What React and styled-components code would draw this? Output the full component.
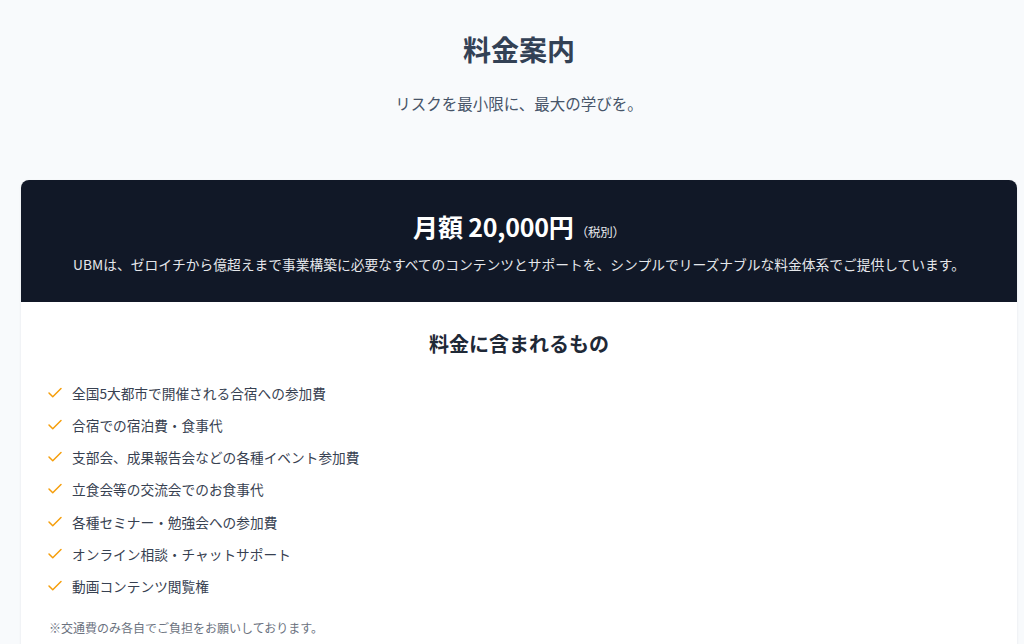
import React from 'react';
import styled, { createGlobalStyle } from 'styled-components';
import { Check } from 'lucide-react';

const GlobalStyle = createGlobalStyle`
    html, body {
        margin: 0;
        padding: 0;
        background: #f8fafc;
        overflow: hidden;
    }
    body {
        font-family: "Noto Sans CJK JP", "Noto Sans", sans-serif;
        -webkit-font-smoothing: antialiased;
    }
`;

const Page = styled.main`
    width: 1038px;
    padding: 33px 21px 40px;
    box-sizing: border-box;
`;

const Intro = styled.header`
    display: flex;
    flex-direction: column;
    align-items: center;
    gap: 24px;
    margin-bottom: 65px;
`;

const Title = styled.h1`
    margin: 0;
    font-size: 28px;
    line-height: 1.2;
    font-weight: 700;
    color: #334155;
`;

const Lead = styled.p`
    margin: 0;
    font-size: 15.5px;
    line-height: 24px;
    color: #475569;
`;

const Card = styled.section`
    border-radius: 8px;
    overflow: hidden;
    background: #ffffff;
    box-shadow: 0 1px 3px rgba(15, 23, 42, 0.08);
`;

const CardHead = styled.div`
    background: #111827;
    color: #ffffff;
    display: flex;
    flex-direction: column;
    align-items: center;
    gap: 11px;
    padding: 29px 24px 28px;
`;

const Price = styled.div`
    display: flex;
    align-items: baseline;
    font-size: 25px;
    line-height: 34px;
    font-weight: 700;
    letter-spacing: -0.2px;
`;

const Tax = styled.span`
    font-size: 12.5px;
    line-height: 1;
    font-weight: 400;
    margin-left: 2px;
    color: #e5e7eb;
`;

const Description = styled.p`
    margin: 0;
    font-size: 13.75px;
    line-height: 20px;
    color: #e5e7eb;
`;

const CardBody = styled.div`
    padding: 28px 28px 24px;
`;

const SectionTitle = styled.h2`
    margin: 0 0 24px;
    text-align: center;
    font-size: 20px;
    line-height: 28px;
    font-weight: 700;
    color: #1f2937;
`;

const List = styled.ul`
    list-style: none;
    margin: 0;
    padding: 0;
    display: flex;
    flex-direction: column;
    gap: 10.3px;
`;

const Item = styled.li`
    display: flex;
    align-items: center;
    gap: 8px;
    font-size: 13.7px;
    line-height: 22px;
    color: #374151;

    svg {
        flex: none;
        margin-left: -3px;
        color: #f59e0b;
    }
`;

const Note = styled.p`
    margin: 22px 0 0;
    font-size: 12px;
    line-height: 18px;
    color: #6b7280;
`;

const included = [
    '全国5大都市で開催される合宿への参加費',
    '合宿での宿泊費・食事代',
    '支部会、成果報告会などの各種イベント参加費',
    '立食会等の交流会でのお食事代',
    '各種セミナー・勉強会への参加費',
    'オンライン相談・チャットサポート',
    '動画コンテンツ閲覧権',
];

const App = () => (
    <>
        <GlobalStyle />
        <Page>
            <Intro>
                <Title>料金案内</Title>
                <Lead>リスクを最小限に、最大の学びを。</Lead>
            </Intro>
            <Card>
                <CardHead>
                    <Price>
                        月額 20,000円<Tax>（税別）</Tax>
                    </Price>
                    <Description>
                        UBMは、ゼロイチから億超えまで事業構築に必要なすべてのコンテンツとサポートを、シンプルでリーズナブルな料金体系でご提供しています。
                    </Description>
                </CardHead>
                <CardBody>
                    <SectionTitle>料金に含まれるもの</SectionTitle>
                    <List>
                        {included.map((text) => (
                            <Item key={text}>
                                <Check size={18} strokeWidth={2} />
                                {text}
                            </Item>
                        ))}
                    </List>
                    <Note>※交通費のみ各自でご負担をお願いしております。</Note>
                </CardBody>
            </Card>
        </Page>
    </>
);

export default App;
